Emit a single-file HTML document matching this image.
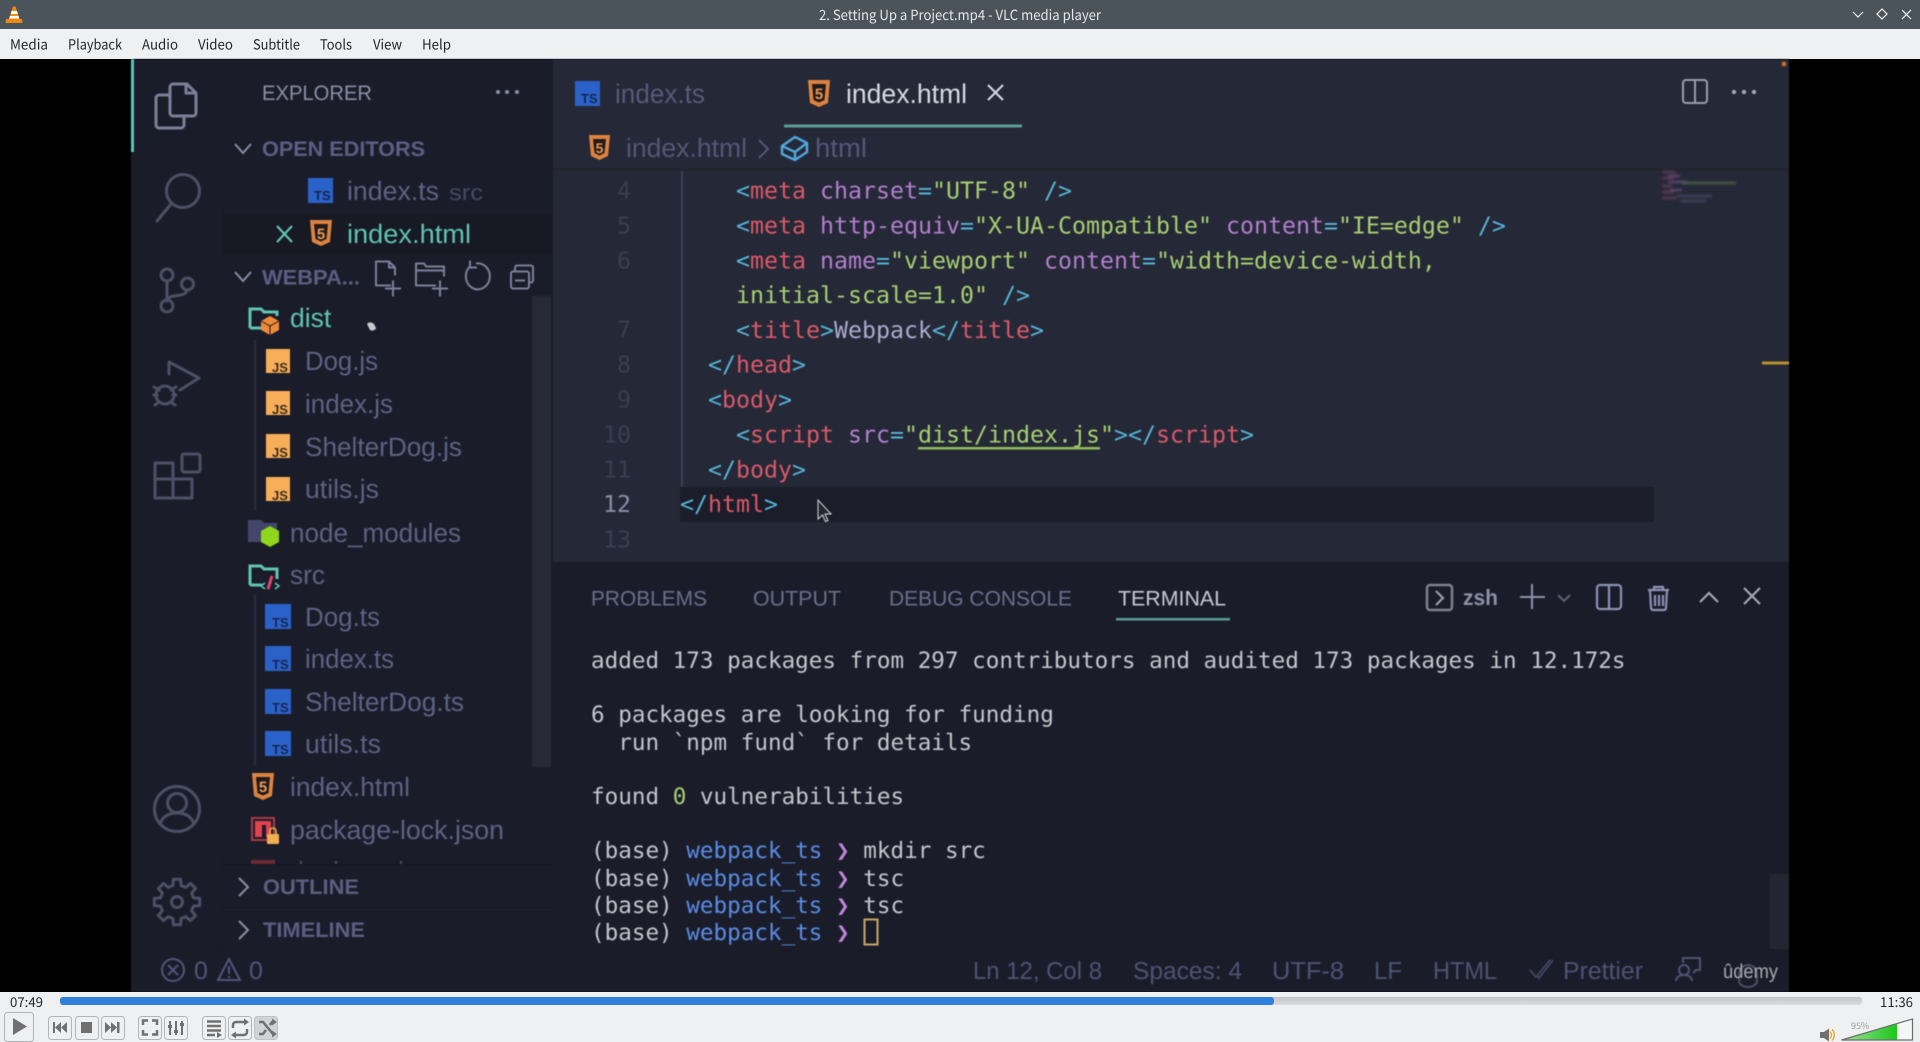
<!DOCTYPE html>
<html lang="en"><head><meta charset="utf-8"><title>2. Setting Up a Project.mp4 - VLC media player</title>
<style>
html,body{margin:0;padding:0;width:1920px;height:1042px;overflow:hidden;background:#000}
svg{position:absolute;left:0;top:0;display:block}
text{text-rendering:geometricPrecision;white-space:pre}
.ui{font-family:"Noto Sans CJK SC","Liberation Sans",sans-serif;font-size:14px;fill:#232629}
.s{font-family:"Liberation Sans",sans-serif}
.sb{font-size:26.5px;fill:#5d6184}
.h{font-size:21px;font-weight:bold;fill:#5a5e82}
.m{font-family:"DejaVu Sans Mono","Liberation Mono",monospace}
.c{font-size:23.26px}
.t{font-size:22.61px;fill:#c4c6cc}
.ln{font-size:23.3px;fill:#3a3e54;text-anchor:end}
.a{fill:#56b4d8}.r{fill:#d9596a}.p{fill:#b27fce}.g{fill:#a6cf72}.w{fill:#a8acd0}
.b{fill:#5a8ce6}.v{fill:#c384dc}
.ib{fill:none;stroke:#4c4f66;stroke-width:3;stroke-linecap:round;stroke-linejoin:round}
.js{font-family:"Liberation Sans",sans-serif;font-weight:bold;font-size:13px;fill:#3b2c1a}
.ts{font-family:"Liberation Sans",sans-serif;font-weight:bold;font-size:13px;fill:#14264f}
.five{font-family:"Liberation Sans",sans-serif;font-weight:bold;font-size:17px;fill:#e89a55;text-anchor:middle}
.btn{fill:#eff0f1;stroke:#b3b4b5;stroke-width:1}
.ico{fill:#707070}
.ist{fill:none;stroke:#707070;stroke-width:2.5}
</style></head><body>
<svg width="1920" height="1042" viewBox="0 0 1920 1042" xmlns="http://www.w3.org/2000/svg">
<rect width="1920" height="1042" fill="#000"/>
<!-- title bar -->
<rect width="1920" height="29" fill="#4b535b"/>
<path d="M13 6.500h2.500L20 20H8.500z" fill="#f28b0c"/><path d="M11.600 11h5.400l.9 3h-7.200zM10 16h8.500l.8 2.500H9.200z" fill="#fff"/><path d="M6 19h16l.5 4H5.500z" fill="#ee8a0e"/>
<text class="ui" x="960" y="20" text-anchor="middle" style="font-size:14px;fill:#e4e6e8" textLength="282" lengthAdjust="spacingAndGlyphs">2. Setting Up a Project.mp4 - VLC media player</text>
<path d="M1853 12l5 5 5-5" fill="none" stroke="#f4f5f6" stroke-width="1.2"/>
<path d="M1882 9l5 5-5 5-5-5z" fill="none" stroke="#f4f5f6" stroke-width="1.2"/>
<path d="M1902 10l9 9M1911 10l-9 9" fill="none" stroke="#f4f5f6" stroke-width="1.2"/>
<!-- menu -->
<rect y="29" width="1920" height="30" fill="#eff0f1"/>
<text class="ui" x="10" y="49.500" textLength="38" lengthAdjust="spacingAndGlyphs">Media</text>
<text class="ui" x="68" y="49.500" textLength="54" lengthAdjust="spacingAndGlyphs">Playback</text>
<text class="ui" x="142" y="49.500" textLength="36" lengthAdjust="spacingAndGlyphs">Audio</text>
<text class="ui" x="198" y="49.500" textLength="35" lengthAdjust="spacingAndGlyphs">Video</text>
<text class="ui" x="253" y="49.500" textLength="47" lengthAdjust="spacingAndGlyphs">Subtitle</text>
<text class="ui" x="320" y="49.500" textLength="32" lengthAdjust="spacingAndGlyphs">Tools</text>
<text class="ui" x="373" y="49.500" textLength="29" lengthAdjust="spacingAndGlyphs">View</text>
<text class="ui" x="422" y="49.500" textLength="29" lengthAdjust="spacingAndGlyphs">Help</text>

<!-- video -->
<g style="filter:blur(0.6px)">
<rect x="131" y="59" width="1658" height="933" fill="#1a1d29"/>
<rect x="553" y="59" width="1236" height="504" fill="#252836"/>
<rect x="131" y="59" width="3" height="93" fill="#5cc4b4"/>
<rect x="222" y="59" width="1" height="891" fill="#171923"/>
<!-- activity icons -->
<g fill="none" stroke="#7b7e98" stroke-width="3" stroke-linejoin="round">
<path d="M170 87a3 3 0 0 1 3-3h14l9 9v20a3 3 0 0 1-3 3h-20a3 3 0 0 1-3-3z"/><path d="M186 84v9h10"/>
<path d="M170 95h-11a3 3 0 0 0-3 3v27a3 3 0 0 0 3 3h22a3 3 0 0 0 3-3v-9"/>
</g>
<g class="ib">
<circle cx="183" cy="191" r="16.5"/><path d="M171 204l-14 17"/>
<circle cx="167" cy="275" r="6"/><circle cx="187.500" cy="284" r="6"/><circle cx="167" cy="306" r="6"/>
<path d="M167 281v19M187 290c0 8-20 3-20 11"/>
<path d="M169 362v12M169 362l30 16-19 12"/>
<circle cx="165" cy="395" r="9"/><path d="M154 387l5 3M176 387l-5 3M154 395h3M173 395h3M155 405l4-3M175 405l-4-3"/>
<path d="M155 463h18v35h-18zM173 479h19v19h-37M155 479h18"/><rect x="182" y="454" width="18" height="18" rx="2"/>
<circle cx="177" cy="809" r="22.500"/><circle cx="177" cy="803" r="9.500"/><path d="M160 824c3-9 10-11 17-11s14 2 17 11"/>
<circle cx="177" cy="902" r="5.500"/>
<path transform="translate(177,902)" d="M-4.100-16.500L-3.600-22.700L3.600-22.700L4.100-16.500L8.800-14.600L13.500-18.600L18.600-13.500L14.600-8.800L16.500-4.100L22.700-3.600L22.700 3.600L16.500 4.100L14.600 8.800L18.600 13.500L13.500 18.600L8.800 14.600L4.100 16.500L3.600 22.700L-3.600 22.700L-4.100 16.500L-8.800 14.600L-13.500 18.600L-18.600 13.500L-14.600 8.800L-16.500 4.100L-22.700 3.600L-22.700-3.600L-16.500-4.100L-14.600-8.800L-18.600-13.500L-13.500-18.600L-8.800-14.600z"/>
</g>
<!-- explorer -->
<text class="s" x="262" y="100" style="font-size:21px;fill:#8b8ea6" textLength="110" lengthAdjust="spacingAndGlyphs">EXPLORER</text>
<circle cx="498" cy="92" r="2" fill="#8b8ea6"/><circle cx="507" cy="92" r="2" fill="#8b8ea6"/><circle cx="517" cy="92" r="2" fill="#8b8ea6"/>
<path d="M235 144l8 9 8-9" fill="none" stroke="#8a8da5" stroke-width="2"/>
<text class="s h" x="262" y="156" textLength="163" lengthAdjust="spacingAndGlyphs">OPEN EDITORS</text>
<rect x="308" y="178" width="25" height="25" fill="#2b62c9"/><text class="ts" x="314" y="200">TS</text>
<text class="s sb" x="347" y="200" textLength="92" lengthAdjust="spacingAndGlyphs">index.ts</text>
<text class="s" x="449" y="200" style="font-size:22px;fill:#454964" textLength="34" lengthAdjust="spacingAndGlyphs">src</text>
<rect x="223" y="213" width="330" height="42" fill="#171923"/>
<path d="M277 226l15 16M292 226l-15 16" stroke="#5fc4b4" stroke-width="2.200" fill="none"/>
<path d="M310 220h22l-2 22-9 4-9-4z" fill="#dd8340"/><path d="M314 224h14l-1.500 15-5.500 2.500-5.500-2.500z" fill="#231a1a"/><text class="five" x="321" y="239" style="font-size:15px">5</text>
<text class="s sb" x="347" y="243" style="fill:#5fc4b4" textLength="124" lengthAdjust="spacingAndGlyphs">index.html</text>
<path d="M235 272l8 9 8-9" fill="none" stroke="#8a8da5" stroke-width="2"/>
<text class="s h" x="262" y="284.500" textLength="98" lengthAdjust="spacingAndGlyphs">WEBPA...</text>
<g fill="none" stroke="#7b7e98" stroke-width="2" stroke-linejoin="round" transform="translate(-1,-1.500)">
<path d="M392 287h-15v-24h13l6 6v8M390 263v6h6M394 282v16M386 290h16"/>
<path d="M437 287h-20v-22h8l2 3h18v10M417 272h28M441 282v16M433 290h16"/>
<path d="M471 268a12 13 0 1 0 6-3M471 262v7h7"/>
<rect x="512" y="273" width="18" height="17" rx="2"/><path d="M516 273v-4a2 2 0 0 1 2-2h14a2 2 0 0 1 2 2v13a2 2 0 0 1-2 2h-2M516 282h10"/>
</g>
<rect x="532" y="296" width="19" height="471" fill="#272934"/>
<rect x="254" y="340" width="2" height="170" fill="#2c2f42"/>
<rect x="254" y="595" width="2" height="170" fill="#2c2f42"/>
<!-- dist -->
<path d="M250 328v-19h11l3 3h13v4M250 328h12" fill="none" stroke="#5fc4b4" stroke-width="3"/>
<path d="M270 316l9 5v9l-9 5-9-5v-9z" fill="#ee8a3a"/><path d="M261 321l9 5 9-5M270 326v9" stroke="#1a1d29" stroke-width="1" fill="none"/>
<text class="s sb" x="290" y="327" style="fill:#5fc4b4">dist</text>
<path d="M367 324c2-3 6-1 7 0l2 4c-1 3-5 3-6 2z" fill="#c8c8cc"/>
<!-- js files -->
<rect x="266" y="349" width="24" height="24" fill="#f8ae58"/><text class="js" x="272" y="372">JS</text><text class="s sb" x="305" y="370" textLength="73" lengthAdjust="spacingAndGlyphs">Dog.js</text>
<rect x="266" y="391" width="24" height="24" fill="#f8ae58"/><text class="js" x="272" y="414">JS</text><text class="s sb" x="305" y="413" textLength="88" lengthAdjust="spacingAndGlyphs">index.js</text>
<rect x="266" y="434" width="24" height="24" fill="#f8ae58"/><text class="js" x="272" y="457">JS</text><text class="s sb" x="305" y="456" textLength="157" lengthAdjust="spacingAndGlyphs">ShelterDog.js</text>
<rect x="266" y="477" width="24" height="24" fill="#f8ae58"/><text class="js" x="272" y="500">JS</text><text class="s sb" x="305" y="498" textLength="74" lengthAdjust="spacingAndGlyphs">utils.js</text>
<!-- node_modules -->
<path d="M248 542v-22h13l3 3h13v19z" fill="#43466a"/>
<path d="M270 526l9 5v11l-9 5-9-5v-11z" fill="#8fd71c"/>
<text class="s sb" x="290" y="542" textLength="171" lengthAdjust="spacingAndGlyphs">node_modules</text>
<!-- src -->
<path d="M250 585v-19h11l3 3h13v10M250 585h12" fill="none" stroke="#5fc4b4" stroke-width="3"/>
<path d="M265 583l-4 3 4 3M275 583l4 3-4 3" fill="none" stroke="#5fc4b4" stroke-width="1.500"/><path d="M272 576l-4 13" stroke="#e0466c" stroke-width="3"/>
<text class="s sb" x="290" y="584" textLength="35" lengthAdjust="spacingAndGlyphs">src</text>
<!-- ts files -->
<rect x="265" y="604" width="26" height="25" fill="#2b62c9"/><text class="ts" x="272" y="627">TS</text><text class="s sb" x="305" y="626" textLength="75" lengthAdjust="spacingAndGlyphs">Dog.ts</text>
<rect x="265" y="646" width="26" height="25" fill="#2b62c9"/><text class="ts" x="272" y="669">TS</text><text class="s sb" x="305" y="668" textLength="89" lengthAdjust="spacingAndGlyphs">index.ts</text>
<rect x="265" y="689" width="26" height="25" fill="#2b62c9"/><text class="ts" x="272" y="712">TS</text><text class="s sb" x="305" y="711" textLength="159" lengthAdjust="spacingAndGlyphs">ShelterDog.ts</text>
<rect x="265" y="731" width="26" height="25" fill="#2b62c9"/><text class="ts" x="272" y="754">TS</text><text class="s sb" x="305" y="753" textLength="76" lengthAdjust="spacingAndGlyphs">utils.ts</text>
<!-- root files -->
<path d="M252 773h22l-2 23-9 4-9-4z" fill="#dd8340"/><path d="M256 777h14l-1.500 16-5.500 2.500-5.500-2.500z" fill="#1f1a1c"/><text class="five" x="263" y="792" style="font-size:15px">5</text>
<text class="s sb" x="290" y="796" textLength="120" lengthAdjust="spacingAndGlyphs">index.html</text>
<rect x="252" y="818" width="22" height="22" fill="none" stroke="#a83a45" stroke-width="2"/><path d="M255 821h16v16h-5v-12h-4v12h-7z" fill="#e0424e"/>
<rect x="267" y="834" width="12" height="10" rx="1" fill="#f0b050"/><path d="M270 834v-3a3 3 0 0 1 6 0v3" fill="none" stroke="#f0b050" stroke-width="1.500"/>
<text class="s sb" x="290" y="839" textLength="214" lengthAdjust="spacingAndGlyphs">package-lock.json</text>
<rect x="251" y="860" width="24" height="4" fill="#6a2a34"/>
<rect x="300" y="861" width="2" height="3" fill="#4a4e6c"/><rect x="335" y="861" width="2" height="3" fill="#4a4e6c"/><rect x="400" y="861" width="2" height="3" fill="#4a4e6c"/>
<rect x="223" y="864" width="330" height="86" fill="#1a1d29"/>
<rect x="223" y="864" width="330" height="1" fill="#14161f"/><rect x="223" y="907" width="330" height="1" fill="#14161f"/>
<path d="M239 878l9 9-9 9M239 921l9 9-9 9" fill="none" stroke="#8a8da5" stroke-width="2"/>
<text class="s h" x="263" y="894" textLength="96" lengthAdjust="spacingAndGlyphs">OUTLINE</text>
<text class="s h" x="263" y="937" textLength="102" lengthAdjust="spacingAndGlyphs">TIMELINE</text>

<!-- tabs -->
<rect x="575" y="81" width="25" height="25" fill="#2b62c9"/><text class="ts" x="581" y="103">TS</text>
<text class="s sb" x="615" y="103" style="font-size:27px;fill:#565a7c" textLength="90" lengthAdjust="spacingAndGlyphs">index.ts</text>
<path d="M808 80h22l-2 23-9 4-9-4z" fill="#dd8340"/><path d="M812 84h14l-1.500 16-5.500 2.500-5.500-2.500z" fill="#231a1a"/><text class="five" x="819" y="99" style="font-size:15px">5</text>
<text class="s" x="846" y="103" style="font-size:27px;fill:#d8dae6" textLength="121" lengthAdjust="spacingAndGlyphs">index.html</text>
<path d="M988 85l15 15M1003 85l-15 15" stroke="#d8dae6" stroke-width="2" fill="none"/>
<rect x="784" y="124.500" width="238" height="3" fill="#5a9c98"/>
<!-- breadcrumbs -->
<path d="M589 135h21l-2 21-8.500 4-8.500-4z" fill="#dd8340"/><path d="M593 139h13l-1.500 14-5 2.500-5-2.500z" fill="#231a1a"/><text class="five" x="599.500" y="153" style="font-size:14px">5</text>
<text class="s sb" x="626" y="157" style="fill:#53577a" textLength="121" lengthAdjust="spacingAndGlyphs">index.html</text>
<path d="M759 140l9 9-9 9" fill="none" stroke="#53577a" stroke-width="2"/>
<path d="M782 146l13-9 12 6v9l-12 8-13-6zM782 146l13 6 12-9M795 152v8" fill="none" stroke="#4fa6de" stroke-width="2.500" stroke-linejoin="round"/>
<text class="s sb" x="815" y="157" style="fill:#53577a" textLength="52" lengthAdjust="spacingAndGlyphs">html</text>
<rect x="553" y="168" width="1236" height="3" fill="#22242f"/>
<!-- top right -->
<rect x="1683" y="80" width="24" height="23" rx="3" fill="none" stroke="#9a9dac" stroke-width="2"/><path d="M1695 80v23" stroke="#9a9dac" stroke-width="2"/>
<circle cx="1734" cy="92" r="2.200" fill="#a4a6b4"/><circle cx="1744" cy="92" r="2.200" fill="#a4a6b4"/><circle cx="1754" cy="92" r="2.200" fill="#a4a6b4"/>
<circle cx="1784" cy="64" r="2.500" fill="#c46a22"/>
<!-- minimap -->
<g stroke-width="2.500" fill="none" opacity=".55" style="filter:blur(1px)">
<path d="M1662 172h14M1662 178h12M1662 186h10M1662 192h12M1662 198h14" stroke="#8a4a6a"/><path d="M1668 176h12M1668 182h20M1670 190h12" stroke="#8a60a0"/><path d="M1682 183h54" stroke="#6e8a55"/><path d="M1676 196h36M1680 201h26" stroke="#5a5a80"/>
</g>
<rect x="1762" y="361.500" width="27" height="3" fill="#b8902a"/>
<!-- line numbers -->
<text class="m ln" x="631" y="198.500">4</text>
<text class="m ln" x="631" y="233.500">5</text>
<text class="m ln" x="631" y="268.500">6</text>
<text class="m ln" x="631" y="337.500">7</text>
<text class="m ln" x="631" y="372.500">8</text>
<text class="m ln" x="631" y="407.500">9</text>
<text class="m ln" x="631" y="442.500">10</text>
<text class="m ln" x="631" y="477.500">11</text>
<text class="m ln" x="631" y="512" style="fill:#8a8ea8">12</text>
<text class="m ln" x="631" y="547.500">13</text>
<rect x="681" y="171" width="2" height="316" fill="#3a3e58"/>
<rect x="680" y="487" width="974" height="35" fill="#1b1d29"/>
<!-- code -->
<g class="m c">
<text x="736" y="198.500"><tspan class="a">&lt;</tspan><tspan class="r">meta</tspan><tspan class="p"> charset</tspan><tspan class="a">=</tspan><tspan class="g">"UTF-8"</tspan><tspan class="a"> /&gt;</tspan></text>
<text x="736" y="233.500"><tspan class="a">&lt;</tspan><tspan class="r">meta</tspan><tspan class="p"> http-equiv</tspan><tspan class="a">=</tspan><tspan class="g">"X-UA-Compatible"</tspan><tspan class="p"> content</tspan><tspan class="a">=</tspan><tspan class="g">"IE=edge"</tspan><tspan class="a"> /&gt;</tspan></text>
<text x="736" y="268.500"><tspan class="a">&lt;</tspan><tspan class="r">meta</tspan><tspan class="p"> name</tspan><tspan class="a">=</tspan><tspan class="g">"viewport"</tspan><tspan class="p"> content</tspan><tspan class="a">=</tspan><tspan class="g">"width=device-width,</tspan></text>
<text x="736" y="303"><tspan class="g">initial-scale=1.0"</tspan><tspan class="a"> /&gt;</tspan></text>
<text x="736" y="338"><tspan class="a">&lt;</tspan><tspan class="r">title</tspan><tspan class="a">&gt;</tspan><tspan class="w">Webpack</tspan><tspan class="a">&lt;/</tspan><tspan class="r">title</tspan><tspan class="a">&gt;</tspan></text>
<text x="708" y="372.500"><tspan class="a">&lt;/</tspan><tspan class="r">head</tspan><tspan class="a">&gt;</tspan></text>
<text x="708" y="407.500"><tspan class="a">&lt;</tspan><tspan class="r">body</tspan><tspan class="a">&gt;</tspan></text>
<text x="736" y="442.500"><tspan class="a">&lt;</tspan><tspan class="r">script</tspan><tspan class="p"> src</tspan><tspan class="a">=</tspan><tspan class="g">"dist/index.js"</tspan><tspan class="a">&gt;&lt;/</tspan><tspan class="r">script</tspan><tspan class="a">&gt;</tspan></text>
<text x="708" y="477.500"><tspan class="a">&lt;/</tspan><tspan class="r">body</tspan><tspan class="a">&gt;</tspan></text>
<text x="680" y="512"><tspan class="a">&lt;/</tspan><tspan class="r">html</tspan><tspan class="a">&gt;</tspan></text>
</g>
<rect x="918" y="447" width="182" height="2.500" fill="#8fbf5a"/>
<path d="M818 500v19l4.500-4 3 6.500 2.500-1-3-6.500h6z" fill="#22242e" stroke="#d8d8dc" stroke-width="1"/>

<!-- panel -->
<rect x="553" y="562" width="1236" height="388" fill="#1a1d29"/>
<text class="s" x="591" y="605.500" style="font-size:21px;fill:#6a6e8c" textLength="116" lengthAdjust="spacingAndGlyphs">PROBLEMS</text>
<text class="s" x="753" y="605.500" style="font-size:21px;fill:#6a6e8c" textLength="88" lengthAdjust="spacingAndGlyphs">OUTPUT</text>
<text class="s" x="889" y="605.500" style="font-size:21px;fill:#6a6e8c" textLength="183" lengthAdjust="spacingAndGlyphs">DEBUG CONSOLE</text>
<text class="s" x="1118" y="605.500" style="font-size:21px;fill:#c6c8d6" textLength="108" lengthAdjust="spacingAndGlyphs">TERMINAL</text>
<rect x="1116" y="618" width="114" height="2.500" fill="#5a9c98"/>
<rect x="1427" y="585" width="25" height="25" rx="3" fill="none" stroke="#7e8090" stroke-width="2.500"/><path d="M1436 591l7 7-7 7" fill="none" stroke="#9a9cac" stroke-width="2.200"/>
<text class="s" x="1463" y="605" style="font-size:22px;font-weight:bold;fill:#8d90a8" textLength="35" lengthAdjust="spacingAndGlyphs">zsh</text>
<path d="M1520 597h25M1532 584v25" stroke="#8d90a8" stroke-width="2" fill="none"/>
<path d="M1558 595l6 6 6-6" stroke="#5e6178" stroke-width="2" fill="none"/>
<rect x="1597" y="585" width="24" height="24" rx="3" fill="none" stroke="#8d90b4" stroke-width="2.200"/><path d="M1609 585v24" stroke="#8d90b4" stroke-width="2.200"/>
<path d="M1648 590h21M1654 590v-3h9v3M1650 590l1 18a2 2 0 0 0 2 2h11a2 2 0 0 0 2-2l1-18M1655 595v11M1659 595v11M1663 595v11" fill="none" stroke="#8d90b4" stroke-width="2.200"/>
<path d="M1700 602l9-9 9 9" fill="none" stroke="#a4a6b0" stroke-width="2.200"/>
<path d="M1744 588l16 16M1760 588l-16 16" fill="none" stroke="#a4a6b0" stroke-width="2.200"/>
<!-- terminal -->
<g class="m t">
<text x="591" y="668">added 173 packages from 297 contributors and audited 173 packages in 12.172s</text>
<text x="591" y="722">6 packages are looking for funding</text>
<text x="591" y="750">  run `npm fund` for details</text>
<text x="591" y="804">found <tspan class="g">0</tspan> vulnerabilities</text>
<text x="591" y="858">(base) <tspan class="b">webpack_ts</tspan> <tspan class="v">❯</tspan> mkdir src</text>
<text x="591" y="886">(base) <tspan class="b">webpack_ts</tspan> <tspan class="v">❯</tspan> tsc</text>
<text x="591" y="913">(base) <tspan class="b">webpack_ts</tspan> <tspan class="v">❯</tspan> tsc</text>
<text x="591" y="940">(base) <tspan class="b">webpack_ts</tspan> <tspan class="v">❯</tspan></text>
</g>
<rect x="864.500" y="919.500" width="13" height="25" fill="none" stroke="#c9a468" stroke-width="2"/>
<rect x="1770" y="874" width="19" height="75" fill="#232530"/>
<!-- status bar -->
<rect x="131" y="950" width="1658" height="42" fill="#1a1d29"/>
<rect x="131" y="950" width="1658" height="1" fill="#171923"/>
<circle cx="173" cy="970" r="11" fill="none" stroke="#50547a" stroke-width="2"/><path d="M168 965l10 10M178 965l-10 10" stroke="#50547a" stroke-width="2"/>
<text class="s" x="194" y="979" style="font-size:25px;fill:#50547a">0</text>
<path d="M229 959l11 21h-22z M229 966v8M229 976v2" fill="none" stroke="#50547a" stroke-width="2"/>
<text class="s" x="249" y="979" style="font-size:25px;fill:#50547a">0</text>
<g class="s" style="font-size:24.5px;fill:#4e5274">
<text x="973" y="979" textLength="129" lengthAdjust="spacingAndGlyphs">Ln 12, Col 8</text>
<text x="1133" y="979" textLength="109" lengthAdjust="spacingAndGlyphs">Spaces: 4</text>
<text x="1272" y="979" textLength="72" lengthAdjust="spacingAndGlyphs">UTF-8</text>
<text x="1374" y="979" textLength="28" lengthAdjust="spacingAndGlyphs">LF</text>
<text x="1433" y="979" textLength="64" lengthAdjust="spacingAndGlyphs">HTML</text>
<text x="1563" y="979" textLength="80" lengthAdjust="spacingAndGlyphs">Prettier</text>
</g>
<path d="M1530 970l6 7 14-17M1537 976l2 2 14-18" fill="none" stroke="#42465f" stroke-width="1.800"/>
<path d="M1683 963v-5h17v12h-4l-3 3" fill="none" stroke="#4e5274" stroke-width="2"/><circle cx="1684" cy="970" r="5" fill="none" stroke="#4e5274" stroke-width="2"/><path d="M1676 981c0-4 4-6 8-6s8 2 8 6" fill="none" stroke="#4e5274" stroke-width="2"/>
<path d="M1739 975a9 10 0 0 1 18 0v6a9 6 0 0 1-18 0z" fill="none" stroke="#4a4d66" stroke-width="2"/>
<text class="s" x="1723" y="978" style="font-size:20px;fill:#a8a9ae" textLength="55" lengthAdjust="spacingAndGlyphs">ûdemy</text>
</g>

<!-- controls -->
<rect y="992" width="1920" height="50" fill="#eff0f1"/>
<text class="ui" x="10" y="1007" style="font-size:13.500px" textLength="33" lengthAdjust="spacingAndGlyphs">07:49</text>
<text class="ui" x="1880" y="1007" style="font-size:13.500px" textLength="33" lengthAdjust="spacingAndGlyphs">11:36</text>
<defs><linearGradient id="pg" x1="0" y1="0" x2="0" y2="1"><stop offset="0" stop-color="#c2c3c4"/><stop offset="1" stop-color="#dcdddd"/></linearGradient>
<linearGradient id="vg" x1="0" y1="0" x2="1" y2="0"><stop offset="0" stop-color="#9fe09a"/><stop offset="1" stop-color="#1bc91b"/></linearGradient></defs>
<rect x="60" y="997" width="1802" height="8" rx="3" fill="url(#pg)"/>
<rect x="60" y="997" width="1214" height="8" rx="3" fill="#2f80d8"/>
<rect class="btn" x="4.500" y="1012.500" width="29" height="29" rx="3"/>
<path class="ico" d="M13 1018l14 8.500-14 8.500z"/>
<rect class="btn" x="48.500" y="1016.500" width="23" height="23" rx="3"/>
<rect class="btn" x="75.500" y="1016.500" width="23" height="23" rx="3"/>
<rect class="btn" x="101.500" y="1016.500" width="23" height="23" rx="3"/>
<path class="ico" d="M53 1022h2v11h-2zM55 1027.500l6-5.500v11zM61 1027.500l6-5.500v11z"/>
<rect class="ico" x="81" y="1022" width="11" height="11"/>
<path class="ico" d="M105 1022l6 5.500-6 5.500zM111 1022l6 5.500-6 5.500zM117 1022h2.500v11H117z"/>
<rect class="btn" x="138.500" y="1016.500" width="23" height="23" rx="3"/>
<rect class="btn" x="164.500" y="1016.500" width="23" height="23" rx="3"/>
<path class="ist" d="M143 1025v-4.500h5M152 1020.500h5v4.500M157 1030v4.500h-5M148 1034.500h-5v-4.500"/>
<path class="ist" style="stroke-width:2" d="M170 1021v14M176 1021v14M182 1021v14"/>
<path class="ico" d="M168 1025h4v3h-4zM174 1030h4v3h-4zM180 1023h4v3h-4z"/>
<rect class="btn" x="202.500" y="1016.500" width="23" height="23" rx="3"/>
<rect class="btn" x="228.500" y="1016.500" width="23" height="23" rx="3"/>
<rect x="254.500" y="1016.500" width="23" height="23" rx="3" fill="#d2d3d4" stroke="#c0c1c2"/>
<path class="ist" d="M207 1021.500h14M207 1026h14M207 1030.500h14M207 1035h8"/><path class="ico" d="M217 1032l5 3-5 3z"/>
<path class="ist" d="M233 1028v-3a3 3 0 0 1 3-3h9M247 1029v3a3 3 0 0 1-3 3h-9"/><path class="ico" d="M244 1018.500l5 3.500-5 3.500zM236 1031.500l-5 3.500 5 3.500z"/>
<path class="ist" d="M259 1022l4 0 10 12h1M259 1034h4l3-4M270 1025l2-3h2"/><path class="ico" d="M272 1018.500l0 7 5-3.500zM272 1030.500v7l5-3.500z"/>
<path d="M1820 1032h4l5-3.500v13l-5-3.500h-4z" fill="#707070"/>
<path d="M1830 1031.500c1.800 2 1.800 5 0 7M1832 1029.500c3 3 3 8 0 11" fill="none" stroke="#f39c1f" stroke-width="1.300"/>
<path d="M1841.500 1040l71-21v21z" fill="#f5f6f6"/>
<path d="M1842 1040l55-16.500v16.500z" fill="url(#vg)"/>
<path d="M1841.500 1040l71-21v21z" fill="none" stroke="#6d6d6d" stroke-width="1.200"/>
<text class="ui" x="1851" y="1029" style="font-size:9px;fill:#9a9b9c">95%</text>
</svg>
</body></html>
